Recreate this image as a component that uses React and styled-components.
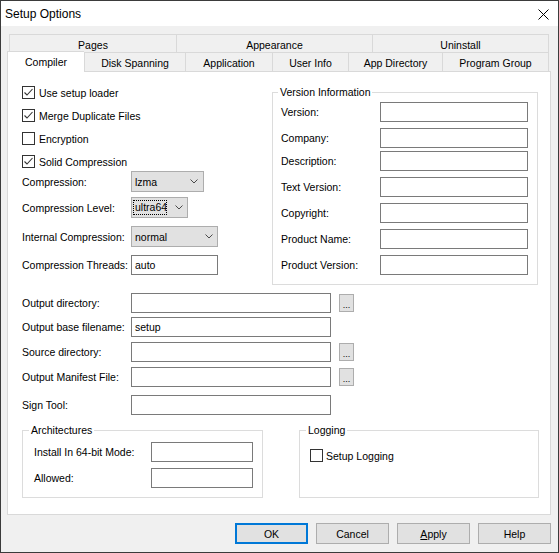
import React from "react";
import styled, { createGlobalStyle } from "styled-components";

const GlobalStyle = createGlobalStyle`
  * { box-sizing: border-box; }
  html, body { margin: 0; padding: 0; background: #ffffff; }
  body {
    font-family: "Liberation Sans", Arial, sans-serif;
    font-size: 10.5px;
    color: #000;
  }
`;

const Window = styled.div`
  width: 559px;
  height: 553px;
  border: 1px solid #3b3b3b;
  background: #f0f0f0;
  display: flex;
  flex-direction: column;
`;

const TitleBar = styled.div`
  height: 25px;
  flex: none;
  background: #ffffff;
  display: flex;
  align-items: center;
  justify-content: space-between;
  padding: 1px 9px 0 4px;
  font-size: 12px;
`;

const Body = styled.div`
  flex: 1;
  display: flex;
  flex-direction: column;
  padding: 8px 7px 0 6px;
`;

const TabRow = styled.div`
  display: flex;
  align-items: flex-start;
  margin: 0 2px;
  height: ${(p) => p.$h}px;
  flex: none;
`;

const Tab = styled.div`
  flex: none;
  width: ${(p) => (p.$active ? p.$w + 2 : p.$w)}px;
  height: ${(p) => (p.$active ? 21 : p.$h)}px;
  border: 1px solid #d9d9d9;
  border-bottom: none;
  border-right: ${(p) => (p.$last ? "1px solid #d9d9d9" : "none")};
  background: ${(p) => (p.$active ? "#ffffff" : "#f0f0f0")};
  display: flex;
  align-items: center;
  justify-content: center;
  padding-top: ${(p) => (p.$active ? 0 : p.$pt)}px;
  white-space: nowrap;
  ${(p) =>
    p.$active &&
    `
    margin-left: -2px;
    margin-top: -1px;
    position: relative;
    z-index: 2;
  `}
`;

const Panel = styled.div`
  flex: none;
  height: 444px;
  background: #ffffff;
  border: 1px solid #d9d9d9;
  padding-left: 14px;
  display: flex;
  flex-direction: column;
`;

const TopSection = styled.div`
  display: flex;
  align-items: flex-start;
  flex: none;
`;

const LeftCol = styled.div`
  width: 250px;
  flex: none;
  display: flex;
  flex-direction: column;
  padding-top: 14px;
`;

const CheckList = styled.div`
  display: flex;
  flex-direction: column;
  gap: 10px;
`;

const CheckRow = styled.div`
  display: flex;
  align-items: center;
  gap: ${(p) => p.$gap ?? 4}px;
  height: 13px;
  margin-top: ${(p) => p.$mt ?? 0}px;
  white-space: nowrap;
`;

const Box = styled.span`
  width: 13px;
  height: 13px;
  flex: none;
  border: 1px solid #333333;
  background: #ffffff;
  display: flex;
  align-items: center;
  justify-content: center;
`;

const FieldRow = styled.div`
  display: flex;
  align-items: center;
  flex: none;
  height: ${(p) => p.$h ?? 20}px;
  margin-top: ${(p) => p.$mt ?? 0}px;
`;

const FieldLabel = styled.span`
  width: ${(p) => p.$w}px;
  flex: none;
  white-space: nowrap;
`;

const TextBox = styled.div`
  width: ${(p) => p.$w}px;
  height: ${(p) => p.$h ?? 20}px;
  flex: none;
  border: 1px solid #7a7a7a;
  background: #ffffff;
  padding: 0 3px;
  display: flex;
  align-items: center;
`;

const Select = styled.div`
  width: ${(p) => p.$w}px;
  height: 21px;
  flex: none;
  border: 1px solid #adadad;
  background: #e1e1e1;
  display: flex;
  align-items: center;
  justify-content: space-between;
  padding: 0 ${(p) => p.$pr ?? 5}px 0 ${(p) => p.$pl ?? 3}px;
`;

const FocusText = styled.span`
  width: 34px;
  height: 15px;
  border: 1px dotted #000000;
  overflow: hidden;
  white-space: nowrap;
  line-height: 13px;
  padding-left: 1px;
`;

const BrowseButton = styled.div`
  width: 15px;
  height: 18px;
  margin-left: 8px;
  flex: none;
  border: 1px solid #adadad;
  background: #e1e1e1;
  display: flex;
  align-items: center;
  justify-content: center;
  font-size: 9px;
  padding-top: 3px;
`;

const LowerSection = styled.div`
  display: flex;
  flex-direction: column;
  margin-top: 8px;
`;

const BottomGroups = styled.div`
  display: flex;
  gap: 36px;
  margin-top: 9px;
`;

const GroupBox = styled.fieldset`
  margin: ${(p) => p.$mt ?? 0}px 0 0 0;
  padding: 0;
  min-width: 0;
  flex: none;
  width: ${(p) => p.$w}px;
  border: 1px solid #dcdcdc;
`;

const Legend = styled.legend`
  margin-left: ${(p) => p.$ml ?? 6}px;
  padding: 0 2px;
  line-height: 13px;
  font-size: 10.5px;
`;

const GroupContent = styled.div`
  padding: ${(p) => p.$pad};
  display: flex;
  flex-direction: column;
`;

const ButtonBar = styled.div`
  display: flex;
  justify-content: flex-end;
  gap: 8px;
  margin-top: 8px;
`;

const Button = styled.div`
  width: 73px;
  height: 21px;
  border: ${(p) => (p.$default ? "2px solid #0078d7" : "1px solid #adadad")};
  background: #e1e1e1;
  display: flex;
  align-items: center;
  justify-content: center;
`;

const Chevron = () => (
  <svg width="8" height="5" viewBox="0 0 8 5">
    <path d="M0.5 0.5 L4 4 L7.5 0.5" stroke="#4a4a4a" strokeWidth="1" fill="none" />
  </svg>
);

const CheckMark = () => (
  <svg width="11" height="11" viewBox="0 0 11 11">
    <path d="M1.5 5.5 L4 8 L9.5 2" stroke="#333333" strokeWidth="1.1" fill="none" />
  </svg>
);

const CloseIcon = () => (
  <svg width="11" height="11" viewBox="0 0 11 11">
    <path d="M0.5 0.5 L10.5 10.5 M10.5 0.5 L0.5 10.5" stroke="#000" strokeWidth="1" />
  </svg>
);

const Check = ({ checked, label, gap, mt }) => (
  <CheckRow $gap={gap} $mt={mt}>
    <Box>{checked && <CheckMark />}</Box>
    <span>{label}</span>
  </CheckRow>
);

const backTabs = [
  { label: "Pages", w: 167 },
  { label: "Appearance", w: 196 },
  { label: "Uninstall", w: 177, last: true },
];

const frontTabs = [
  { label: "Compiler", w: 75, active: true },
  { label: "Disk Spanning", w: 101 },
  { label: "Application", w: 87 },
  { label: "User Info", w: 76 },
  { label: "App Directory", w: 94 },
  { label: "Program Group", w: 107, last: true },
];

const versionFields = [
  { label: "Version:", mt: 3 },
  { label: "Company:", mt: 6 },
  { label: "Description:", mt: 3 },
  { label: "Text Version:", mt: 6 },
  { label: "Copyright:", mt: 6 },
  { label: "Product Name:", mt: 6 },
  { label: "Product Version:", mt: 6 },
];

const lowerFields = [
  { label: "Output directory:", mt: 0, browse: true },
  { label: "Output base filename:", mt: 4, value: "setup" },
  { label: "Source directory:", mt: 5, browse: true },
  { label: "Output Manifest File:", mt: 5, browse: true },
  { label: "Sign Tool:", mt: 8 },
];

export default function App() {
  return (
    <>
      <GlobalStyle />
      <Window>
        <TitleBar>
          <span>Setup Options</span>
          <CloseIcon />
        </TitleBar>
        <Body>
          <TabRow $h={18}>
            {backTabs.map((t) => (
              <Tab key={t.label} $w={t.w} $h={18} $pt={2} $last={t.last}>
                {t.label}
              </Tab>
            ))}
          </TabRow>
          <TabRow $h={19}>
            {frontTabs.map((t) => (
              <Tab key={t.label} $w={t.w} $h={19} $pt={2} $last={t.last} $active={t.active}>
                {t.label}
              </Tab>
            ))}
          </TabRow>
          <Panel>
            <TopSection>
              <LeftCol>
                <CheckList>
                  <Check checked label="Use setup loader" />
                  <Check checked label="Merge Duplicate Files" />
                  <Check label="Encryption" />
                  <Check checked label="Solid Compression" />
                </CheckList>
                <FieldRow $h={21} $mt={3}>
                  <FieldLabel $w={109}>Compression:</FieldLabel>
                  <Select $w={73}>
                    <span>lzma</span>
                    <Chevron />
                  </Select>
                </FieldRow>
                <FieldRow $h={21} $mt={5}>
                  <FieldLabel $w={109}>Compression Level:</FieldLabel>
                  <Select $w={57} $pl={1} $pr={4}>
                    <FocusText>ultra64</FocusText>
                    <Chevron />
                  </Select>
                </FieldRow>
                <FieldRow $h={21} $mt={8}>
                  <FieldLabel $w={109}>Internal Compression:</FieldLabel>
                  <Select $w={87} $pr={4}>
                    <span>normal</span>
                    <Chevron />
                  </Select>
                </FieldRow>
                <FieldRow $mt={8}>
                  <FieldLabel $w={109}>Compression Threads:</FieldLabel>
                  <TextBox $w={87}>auto</TextBox>
                </FieldRow>
              </LeftCol>
              <GroupBox $w={266} $mt={14}>
                <Legend $ml={5}>Version Information</Legend>
                <GroupContent $pad="0 9px 9px 8px">
                  {versionFields.map((f) => (
                    <FieldRow key={f.label} $mt={f.mt}>
                      <FieldLabel $w={99}>{f.label}</FieldLabel>
                      <TextBox $w={148} />
                    </FieldRow>
                  ))}
                </GroupContent>
              </GroupBox>
            </TopSection>

            <LowerSection>
              {lowerFields.map((f) => (
                <FieldRow key={f.label} $mt={f.mt}>
                  <FieldLabel $w={109}>{f.label}</FieldLabel>
                  <TextBox $w={200}>{f.value}</TextBox>
                  {f.browse && <BrowseButton>...</BrowseButton>}
                </FieldRow>
              ))}
            </LowerSection>

            <BottomGroups>
              <GroupBox $w={241}>
                <Legend $ml={6}>Architectures</Legend>
                <GroupContent $pad="0 9px 9px 11px">
                  <FieldRow $mt={5}>
                    <FieldLabel $w={117}>Install In 64-bit Mode:</FieldLabel>
                    <TextBox $w={102} />
                  </FieldRow>
                  <FieldRow $mt={6}>
                    <FieldLabel $w={117}>Allowed:</FieldLabel>
                    <TextBox $w={102} />
                  </FieldRow>
                </GroupContent>
              </GroupBox>
              <GroupBox $w={240}>
                <Legend $ml={6}>Logging</Legend>
                <GroupContent $pad="0 9px 9px 10px">
                  <Check label="Setup Logging" gap={3} mt={12} />
                </GroupContent>
              </GroupBox>
            </BottomGroups>
          </Panel>
          <ButtonBar>
            <Button $default>OK</Button>
            <Button>Cancel</Button>
            <Button>
              <span>
                <u>A</u>pply
              </span>
            </Button>
            <Button>Help</Button>
          </ButtonBar>
        </Body>
      </Window>
    </>
  );
}
